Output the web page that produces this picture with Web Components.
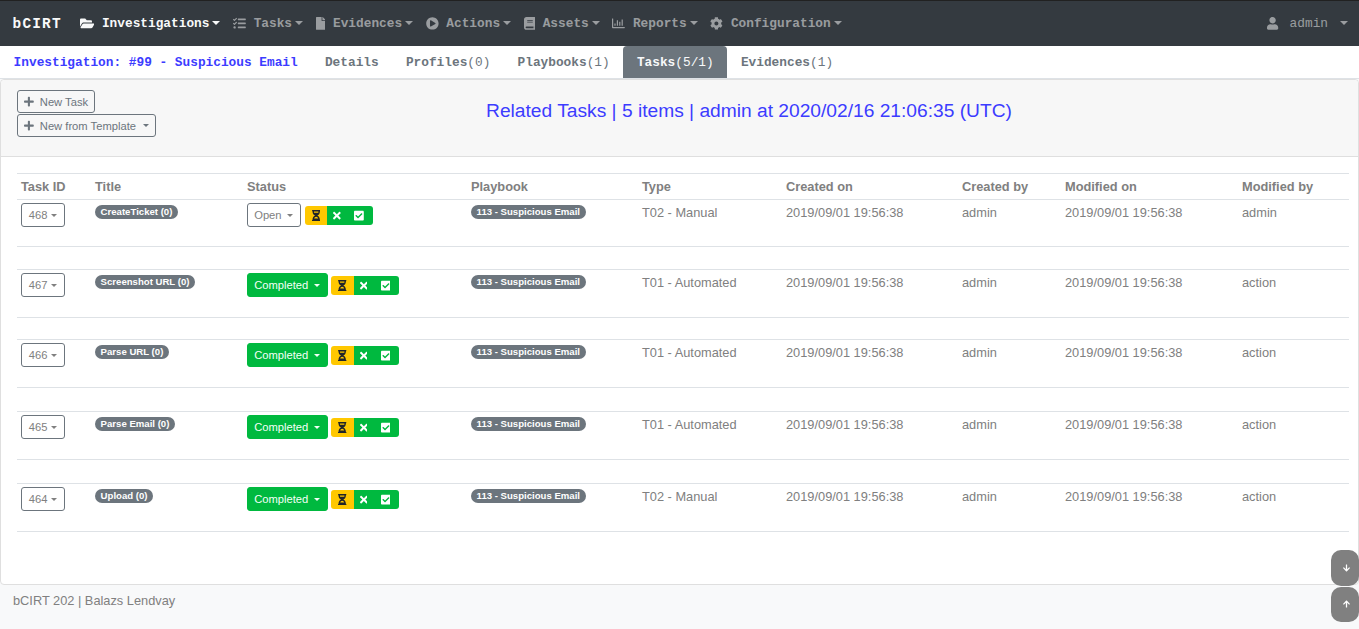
<!DOCTYPE html>
<html lang="en">
<head>
<meta charset="utf-8">
<title>bCIRT</title>
<style>
  html, body { margin: 0; padding: 0; height: 100%; overflow: hidden; background: #f8f9fa; }
  body { font-family: "Liberation Sans", Arial, sans-serif; display: flex; flex-direction: column; position: relative; }
</style>
</head>
<body>
<bc-navbar brand="bCIRT">
  <bc-nav-item icon="folder" active>Investigations</bc-nav-item>
  <bc-nav-item icon="tasks">Tasks</bc-nav-item>
  <bc-nav-item icon="file">Evidences</bc-nav-item>
  <bc-nav-item icon="play">Actions</bc-nav-item>
  <bc-nav-item icon="book">Assets</bc-nav-item>
  <bc-nav-item icon="chart">Reports</bc-nav-item>
  <bc-nav-item icon="cog">Configuration</bc-nav-item>
  <bc-user slot="right">admin</bc-user>
</bc-navbar>

<bc-tabs>
  <bc-tab kind="title">Investigation: #99 - Suspicious Email</bc-tab>
  <bc-tab>Details</bc-tab>
  <bc-tab count="(0)">Profiles</bc-tab>
  <bc-tab count="(1)">Playbooks</bc-tab>
  <bc-tab count="(5/1)" active>Tasks</bc-tab>
  <bc-tab count="(1)">Evidences</bc-tab>
</bc-tabs>

<bc-card>
  <bc-btn slot="tools" icon="plus">New Task</bc-btn>
  <bc-btn slot="tools" icon="plus" caret="7">New from Template</bc-btn>
  <span slot="heading">Related Tasks | 5 items | admin at 2020/02/16 21:06:35 (UTC)</span>

  <bc-task-table>
    <bc-task-row task="468" name="CreateTicket (0)" status="Open" book="113 - Suspicious Email" type="T02 - Manual" created="2019/09/01 19:56:38" creator="admin" modified="2019/09/01 19:56:38" modifier="admin" main="47" gap="23"></bc-task-row>
    <bc-task-row task="467" name="Screenshot URL (0)" status="Completed" book="113 - Suspicious Email" type="T01 - Automated" created="2019/09/01 19:56:38" creator="admin" modified="2019/09/01 19:56:38" modifier="action" main="48" gap="22"></bc-task-row>
    <bc-task-row task="466" name="Parse URL (0)" status="Completed" book="113 - Suspicious Email" type="T01 - Automated" created="2019/09/01 19:56:38" creator="admin" modified="2019/09/01 19:56:38" modifier="action" main="48" gap="24"></bc-task-row>
    <bc-task-row task="465" name="Parse Email (0)" status="Completed" book="113 - Suspicious Email" type="T01 - Automated" created="2019/09/01 19:56:38" creator="admin" modified="2019/09/01 19:56:38" modifier="action" main="48" gap="24"></bc-task-row>
    <bc-task-row task="464" name="Upload (0)" status="Completed" book="113 - Suspicious Email" type="T02 - Manual" created="2019/09/01 19:56:38" creator="admin" modified="2019/09/01 19:56:38" modifier="action" main="48" gap="0"></bc-task-row>
  </bc-task-table>
</bc-card>

<bc-footer>bCIRT 202 | Balazs Lendvay</bc-footer>
<bc-scroll-buttons></bc-scroll-buttons>

<script>
  const ICONS = {
    folder: [576, 'M572.694 292.093L500.27 416.248A63.997 63.997 0 0 1 444.989 448H45.025c-18.523 0-30.064-20.093-20.731-36.093l72.424-124.155A64 64 0 0 1 152 256h399.964c18.523 0 30.064 20.093 20.73 36.093zM152 224h328v-48c0-26.51-21.49-48-48-48H272l-64-64H48C21.49 64 0 85.49 0 112v278.046l69.077-118.418C86.214 242.25 117.989 224 152 224z'],
    tasks: [512, 'M139.61 35.5a12 12 0 0 0-17 0L58.93 98.81l-22.7-22.12a12 12 0 0 0-17 0L3.53 92.41a12 12 0 0 0 0 17l47.59 47.4a12.78 12.78 0 0 0 17.61 0l15.59-15.62L156.52 69a12.09 12.09 0 0 0 .09-17zm0 159.19a12 12 0 0 0-17 0l-63.68 63.72-22.7-22.1a12 12 0 0 0-17 0L3.53 252a12 12 0 0 0 0 17L51 316.5a12.77 12.77 0 0 0 17.6 0l15.7-15.69 72.2-72.22a12 12 0 0 0 .09-16.9zM64 368c-26.49 0-48.59 21.5-48.59 48S37.53 464 64 464a48 48 0 0 0 0-96zm432 16H208a16 16 0 0 0-16 16v32a16 16 0 0 0 16 16h288a16 16 0 0 0 16-16v-32a16 16 0 0 0-16-16zm0-320H208a16 16 0 0 0-16 16v32a16 16 0 0 0 16 16h288a16 16 0 0 0 16-16V80a16 16 0 0 0-16-16zm0 160H208a16 16 0 0 0-16 16v32a16 16 0 0 0 16 16h288a16 16 0 0 0 16-16v-32a16 16 0 0 0-16-16z'],
    file: [384, 'M224 136V0H24C10.7 0 0 10.7 0 24v464c0 13.3 10.7 24 24 24h336c13.3 0 24-10.7 24-24V160H248c-13.2 0-24-10.8-24-24zm160-14.1v6.1H256V0h6.1c6.4 0 12.5 2.5 17 7l97.9 98c4.5 4.5 7 10.6 7 16.9z'],
    play: [512, 'M256 8C119 8 8 119 8 256s111 248 248 248 248-111 248-248S393 8 256 8zm115.7 272l-176 101c-15.8 8.8-35.7-2.5-35.7-21V152c0-18.4 19.8-29.8 35.7-21l176 107c16.4 9.2 16.4 32.9 0 42z'],
    book: [448, 'M448 360V24c0-13.3-10.7-24-24-24H96C43 0 0 43 0 96v320c0 53 43 96 96 96h328c13.3 0 24-10.7 24-24v-16c0-7.5-3.5-14.3-8.9-18.7-4.2-15.4-4.2-59.3 0-74.7 5.4-4.3 8.9-11.1 8.9-18.6zM128 134c0-3.3 2.7-6 6-6h212c3.3 0 6 2.7 6 6v20c0 3.3-2.7 6-6 6H134c-3.3 0-6-2.7-6-6v-20zm0 64c0-3.3 2.7-6 6-6h212c3.3 0 6 2.7 6 6v20c0 3.3-2.7 6-6 6H134c-3.3 0-6-2.7-6-6v-20zm253.4 250H96c-17.7 0-32-14.3-32-32 0-17.6 14.4-32 32-32h285.4c-1.9 17.1-1.9 46.9 0 64z'],
    chart: [512, 'M396.8 352h22.4c6.4 0 12.8-6.4 12.8-12.8V108.8c0-6.4-6.4-12.8-12.8-12.8h-22.4c-6.4 0-12.8 6.4-12.8 12.8v230.4c0 6.4 6.4 12.8 12.8 12.8zm-192 0h22.4c6.4 0 12.8-6.4 12.8-12.8V140.8c0-6.4-6.4-12.8-12.8-12.8h-22.4c-6.4 0-12.8 6.4-12.8 12.8v198.4c0 6.4 6.4 12.8 12.8 12.8zm96 0h22.4c6.4 0 12.8-6.4 12.8-12.8V204.8c0-6.4-6.4-12.8-12.8-12.8h-22.4c-6.4 0-12.8 6.4-12.8 12.8v134.4c0 6.4 6.4 12.8 12.8 12.8zM496 400H48V80c0-8.84-7.16-16-16-16H16C7.16 64 0 71.16 0 80v336c0 17.67 14.33 32 32 32h464c8.84 0 16-7.16 16-16v-16c0-8.84-7.16-16-16-16zm-387.2-48h22.4c6.4 0 12.8-6.4 12.8-12.8v-70.4c0-6.4-6.4-12.8-12.8-12.8h-22.4c-6.4 0-12.8 6.4-12.8 12.8v70.4c0 6.4 6.4 12.8 12.8 12.8z'],
    cog: [512, 'M487.4 315.7l-42.6-24.6c4.3-23.2 4.3-47 0-70.2l42.6-24.6c4.9-2.8 7.1-8.6 5.5-14-11.1-35.6-30-67.8-54.7-94.6-3.8-4.1-10-5.1-14.8-2.3L380.8 110c-17.9-15.4-38.5-27.3-60.8-35.1V25.8c0-5.6-3.9-10.5-9.4-11.7-36.7-8.2-74.3-7.8-109.2 0-5.5 1.2-9.4 6.1-9.4 11.7V75c-22.2 7.9-42.8 19.8-60.8 35.1L88.7 85.5c-4.9-2.8-11-1.9-14.8 2.3-24.7 26.7-43.6 58.9-54.7 94.6-1.7 5.4.6 11.2 5.5 14L67.3 221c-4.3 23.2-4.3 47 0 70.2l-42.6 24.6c-4.9 2.8-7.1 8.6-5.5 14 11.1 35.6 30 67.8 54.7 94.6 3.8 4.1 10 5.1 14.8 2.3l42.6-24.6c17.9 15.4 38.5 27.3 60.8 35.1v49.2c0 5.6 3.9 10.5 9.4 11.7 36.7 8.2 74.3 7.8 109.2 0 5.5-1.2 9.4-6.1 9.4-11.7v-49.2c22.2-7.9 42.8-19.8 60.8-35.1l42.6 24.6c4.9 2.8 11 1.9 14.8-2.3 24.7-26.7 43.6-58.9 54.7-94.6 1.5-5.5-.7-11.3-5.6-14.1zM256 336c-44.1 0-80-35.9-80-80s35.9-80 80-80 80 35.9 80 80-35.9 80-80 80z'],
    user: [448, 'M224 256c70.7 0 128-57.3 128-128S294.7 0 224 0 96 57.3 96 128s57.3 128 128 128zm89.6 32h-16.7c-22.2 10.2-46.9 16-72.9 16s-50.6-5.8-72.9-16h-16.7C60.2 288 0 348.2 0 422.4V464c0 26.5 21.5 48 48 48h352c26.5 0 48-21.5 48-48v-41.6c0-74.2-60.2-134.4-134.4-134.4z'],
    plus: [448, 'M416 208H272V64c0-17.67-14.33-32-32-32h-32c-17.67 0-32 14.33-32 32v144H32c-17.67 0-32 14.33-32 32v32c0 17.67 14.33 32 32 32h144v144c0 17.67 14.33 32 32 32h32c17.67 0 32-14.33 32-32V304h144c17.67 0 32-14.33 32-32v-32c0-17.67-14.33-32-32-32z'],
    times: [352, 'M242.72 256l100.07-100.07c12.28-12.28 12.28-32.19 0-44.48l-22.24-22.24c-12.28-12.28-32.19-12.28-44.48 0L176 189.28 75.93 89.21c-12.28-12.28-32.19-12.28-44.48 0L9.21 111.45c-12.28 12.28-12.28 32.19 0 44.48L109.28 256 9.21 356.07c-12.28 12.28-12.28 32.19 0 44.48l22.24 22.24c12.28 12.28 32.2 12.28 44.48 0L176 322.72l100.07 100.07c12.28 12.28 32.2 12.28 44.48 0l22.24-22.24c12.28-12.28 12.28-32.19 0-44.48L242.72 256z'],
    check: [448, 'M400 480H48c-26.51 0-48-21.49-48-48V80c0-26.51 21.49-48 48-48h352c26.51 0 48 21.49 48 48v352c0 26.51-21.49 48-48 48zm-204.686-98.059l184-184c6.248-6.248 6.248-16.379 0-22.627l-22.627-22.627c-6.248-6.248-16.379-6.249-22.628 0L184 302.745l-70.059-70.059c-6.248-6.248-16.379-6.248-22.628 0l-22.627 22.627c-6.248 6.248-6.248 16.379 0 22.627l104 104c6.249 6.25 16.379 6.25 22.628.001z'],
    hourglass: [384, 'M360 0H24C10.745 0 0 10.745 0 24v16c0 13.255 10.745 24 24 24 0 90.965 51.016 167.734 120.842 192C75.016 280.266 24 357.035 24 448c-13.255 0-24 10.745-24 24v16c0 13.255 10.745 24 24 24h336c13.255 0 24-10.745 24-24v-16c0-13.255-10.745-24-24-24 0-90.965-51.016-167.734-120.842-192C308.984 231.734 360 154.965 360 64c13.255 0 24-10.745 24-24V24c0-13.255-10.745-24-24-24zm-75.078 384H99.08c17.059-46.797 52.096-80 92.92-80 40.821 0 75.862 33.196 92.922 80zm.019-256H99.078C91.988 108.548 88 86.748 88 64h208c0 22.805-3.987 44.587-11.059 64z'],
    up: [448, 'M34.9 289.5l-22.2-22.2c-9.4-9.4-9.4-24.6 0-33.9L207 39c9.4-9.4 24.6-9.4 33.9 0l194.3 194.3c9.4 9.4 9.4 24.6 0 33.9L413 289.4c-9.5 9.5-25 9.3-34.3-.4L264 168.6V456c0 13.3-10.7 24-24 24h-32c-13.3 0-24-10.7-24-24V168.6L69.2 289.1c-9.3 9.8-24.8 10-34.3.4z']
  };

  // 1em high svg, the width comes from the viewBox like a font icon
  function icon(name, size) {
    const [w, d] = ICONS[name];
    return `<svg xmlns="http://www.w3.org/2000/svg" viewBox="0 0 ${w} 512" width="${size * w / 512}" height="${size}" fill="currentColor" style="display:block;flex:none"><path d="${d}"/></svg>`;
  }

  const MONO = '"Liberation Mono", "Courier New", monospace';
  const SANS = '"Liberation Sans", Arial, sans-serif';

  class BcNavbar extends HTMLElement {
    connectedCallback() {
      this.attachShadow({ mode: 'open' }).innerHTML = `
        <style>
          :host { display: flex; align-items: center; height: 45px; flex: none; box-sizing: content-box;
                  background: #343a40; border-top: 1px solid #212121; font-family: ${MONO}; padding-left: 12.6px; }
          .brand { color: #f8f9fa; font-size: 14.4px; letter-spacing: 1.2px; font-weight: bold; margin-right: 11.7px; }
          nav { display: flex; align-items: center; }
          .right { margin-left: auto; padding-right: 11px; display: flex; }
        </style>
        <span class="brand">${this.getAttribute('brand')}</span>
        <nav><slot></slot></nav>
        <div class="right"><slot name="right"></slot></div>
      `;
    }
  }

  class BcNavItem extends HTMLElement {
    connectedCallback() {
      this.attachShadow({ mode: 'open' }).innerHTML = `
        <style>
          :host { display: flex; align-items: center; padding: 0 6.4px; font-size: 12.8px; font-weight: bold;
                  color: rgba(255,255,255,.5); white-space: nowrap; }
          :host([active]) { color: #f8f9fa; }
          .ic { margin-right: 7.68px; }
          .caret { margin-left: 2.94px; border-top: 4px solid; border-left: 4px solid transparent; border-right: 4px solid transparent; margin-top: -2px; }
        </style>
        <span class="ic">${icon(this.getAttribute('icon'), 12.8)}</span><slot></slot><span class="caret"></span>
      `;
    }
  }

  class BcUser extends HTMLElement {
    connectedCallback() {
      this.attachShadow({ mode: 'open' }).innerHTML = `
        <style>
          :host { display: flex; align-items: center; font-size: 12.8px; color: rgba(255,255,255,.5); white-space: nowrap; }
          .ic { margin-right: 11px; }
          .caret { margin-left: 12px; border-top: 4px solid; border-left: 4px solid transparent; border-right: 4px solid transparent; margin-top: -2px; }
        </style>
        <span class="ic">${icon('user', 12.8)}</span><slot></slot><span class="caret"></span>
      `;
    }
  }

  class BcTabs extends HTMLElement {
    connectedCallback() {
      this.attachShadow({ mode: 'open' }).innerHTML = `
        <style>
          :host { display: flex; flex: none; height: 32px; background: #fff; border-bottom: 1px solid #dee2e6; font-family: ${MONO}; }
        </style>
        <slot></slot>
      `;
    }
  }

  class BcTab extends HTMLElement {
    connectedCallback() {
      const count = this.getAttribute('count') || '';
      this.attachShadow({ mode: 'open' }).innerHTML = `
        <style>
          :host { display: block; padding: 1px 13.6px 0; height: 32px; box-sizing: border-box; font-size: 12.8px; line-height: 32px; color: #6c757d; white-space: nowrap; }
          :host([active]) { background: #6c757d; color: #f8f9fa; border-radius: 4px 4px 0 0; }
          :host([kind="title"]) { color: #3c3cff; }
          b { font-weight: bold; }
        </style>
        <b><slot></slot></b>${count}
      `;
    }
  }

  class BcCard extends HTMLElement {
    connectedCallback() {
      this.attachShadow({ mode: 'open' }).innerHTML = `
        <style>
          :host { display: flex; flex-direction: column; flex: 1; min-height: 0; background: #fff;
                  border: 1px solid #dfdfdf; border-radius: 4px; font-family: ${SANS}; }
          header { display: flex; height: 77px; box-sizing: border-box; padding: 10px 16px 0; flex: none;
                   background: #f7f7f7; border-bottom: 1px solid #dfdfdf; border-radius: 4px 4px 0 0; }
          .tools { display: flex; flex-direction: column; align-items: flex-start; gap: 1px; width: 139px; flex: none; }
          h1 { flex: 1; margin: 6.6px 0 0; text-align: center; font-size: 19.2px; font-weight: normal; color: #3c3cff; line-height: 28.8px; }
          .body { padding: 16px; }
        </style>
        <header>
          <div class="tools"><slot name="tools"></slot></div>
          <h1><slot name="heading"></slot></h1>
        </header>
        <div class="body"><slot></slot></div>
      `;
    }
  }

  class BcBtn extends HTMLElement {
    connectedCallback() {
      const ic = this.getAttribute('icon');
      const caret = this.getAttribute('caret');
      this.attachShadow({ mode: 'open' }).innerHTML = `
        <style>
          :host { display: inline-flex; align-items: center; box-sizing: border-box; height: 23px; padding: 0 6px;
                  border: 1px solid #6c757d; border-radius: 3px; font-size: 11.2px; color: #6c757d; white-space: nowrap; }
          :host([variant="success"]) { background: #00b93f; border-color: #00b93f; color: #f4fff7; }
          .ic { margin-right: 6px; }
          .caret { border-top: 3px solid; border-left: 3px solid transparent; border-right: 3px solid transparent; margin-top: -1px; }
        </style>
        ${ic ? `<span class="ic">${icon(ic, 11.2)}</span>` : ''}<slot></slot>${caret !== null ? `<span class="caret" style="margin-left:${caret}px"></span>` : ''}
      `;
    }
  }

  class BcBadge extends HTMLElement {
    connectedCallback() {
      this.attachShadow({ mode: 'open' }).innerHTML = `
        <style>
          :host { display: inline-block; box-sizing: border-box; height: 14px; line-height: 13px; padding: 0 5.6px; border-radius: 7px;
                  background: #6c757d; color: #fff; font-weight: bold; font-size: 9.6px; white-space: nowrap; }
        </style>
        <slot></slot>
      `;
    }
  }

  class BcActionGroup extends HTMLElement {
    connectedCallback() {
      this.attachShadow({ mode: 'open' }).innerHTML = `
        <style>
          :host { display: inline-flex; height: 19px; border-radius: 3px; overflow: hidden; margin-left: 3.7px; margin-top: 3px; }
          span { display: flex; align-items: center; justify-content: center; box-sizing: border-box; }
          .wait { width: 22.5px; background: #ffc800; color: #212529; }
          .no { width: 19.5px; background: #00b93f; color: #fff; }
          .yes { width: 26px; padding-right: 1.5px; background: #00b93f; color: #fff; }
        </style>
        <span class="wait">${icon('hourglass', 11.2)}</span>
        <span class="no">${icon('times', 11.2)}</span>
        <span class="yes">${icon('check', 11.2)}</span>
      `;
    }
  }

  const COLUMNS = '74px 152px 224px 171px 144px 176px 103px 177px 111px';

  class BcTaskTable extends HTMLElement {
    connectedCallback() {
      const heads = ['Task ID', 'Title', 'Status', 'Playbook', 'Type', 'Created on', 'Created by', 'Modified on', 'Modified by'];
      this.attachShadow({ mode: 'open' }).innerHTML = `
        <style>
          :host { display: block; width: 1332px; font-size: 12.8px; color: #808080; }
          .head { display: grid; grid-template-columns: ${COLUMNS}; height: 25px; align-items: center; font-weight: bold; border-top: 1px solid #dee2e6; }
          .head div { padding-left: 4px; }
        </style>
        <div class="head">${heads.map(h => `<div>${h}</div>`).join('')}</div>
        <slot></slot>
      `;
    }
  }

  class BcTaskRow extends HTMLElement {
    connectedCallback() {
      const a = n => this.getAttribute(n);
      const status = a('status');
      const variant = status === 'Completed' ? 'variant="success"' : '';
      this.attachShadow({ mode: 'open' }).innerHTML = `
        <style>
          :host { display: block; border-top: 1px solid #dee2e6; }
          .main { display: grid; grid-template-columns: ${COLUMNS}; box-sizing: border-box; height: ${a('main')}px; border-bottom: 1px solid #dee2e6; }
          .main > div { padding: 3px 0 0 4px; line-height: 19.2px; }
          .gap { height: ${Math.max(a('gap') - 1, 0)}px; }
          .id, .status { display: flex; align-items: flex-start; }
          .id bc-btn { padding: 1px 6.7px 0; height: 24px; color: #808080; }
          .status bc-btn { padding: 1px 6.7px 0 6.2px; height: 24px; }
          .status bc-btn:not([variant]) { color: #808080; }
          bc-badge { margin-top: 2px; vertical-align: top; }
        </style>
        <div class="main">
          <div class="id"><bc-btn caret="4">${a('task')}</bc-btn></div>
          <div><bc-badge>${a('name')}</bc-badge></div>
          <div class="status"><bc-btn ${variant} caret="5.6">${status}</bc-btn><bc-action-group></bc-action-group></div>
          <div><bc-badge>${a('book')}</bc-badge></div>
          <div>${a('type')}</div>
          <div>${a('created')}</div>
          <div>${a('creator')}</div>
          <div>${a('modified')}</div>
          <div>${a('modifier')}</div>
        </div>
        <div class="gap"></div>
      `;
    }
  }

  class BcFooter extends HTMLElement {
    connectedCallback() {
      this.attachShadow({ mode: 'open' }).innerHTML = `
        <style>
          :host { display: block; flex: none; height: 44px; box-sizing: border-box; padding: 6px 13px 0; background: #f8f9fa;
                  font-size: 12.8px; line-height: 19.2px; color: #808080; font-family: ${SANS}; }
        </style>
        <slot></slot>
      `;
    }
  }

  class BcScrollButtons extends HTMLElement {
    connectedCallback() {
      this.attachShadow({ mode: 'open' }).innerHTML = `
        <style>
          :host { position: absolute; right: 0; top: 550px; width: 28px; display: flex; flex-direction: column; gap: 1px; }
          div { height: 35.5px; padding-left: 2px; box-sizing: border-box; background: #808080; border-radius: 10px; color: #fff; display: flex; align-items: center; justify-content: center; }
          .down svg { transform: rotate(180deg); }
        </style>
        <div class="down">${icon('up', 8)}</div>
        <div>${icon('up', 8)}</div>
      `;
    }
  }

  customElements.define('bc-navbar', BcNavbar);
  customElements.define('bc-nav-item', BcNavItem);
  customElements.define('bc-user', BcUser);
  customElements.define('bc-tabs', BcTabs);
  customElements.define('bc-tab', BcTab);
  customElements.define('bc-card', BcCard);
  customElements.define('bc-btn', BcBtn);
  customElements.define('bc-badge', BcBadge);
  customElements.define('bc-action-group', BcActionGroup);
  customElements.define('bc-task-table', BcTaskTable);
  customElements.define('bc-task-row', BcTaskRow);
  customElements.define('bc-footer', BcFooter);
  customElements.define('bc-scroll-buttons', BcScrollButtons);
</script>
</body>
</html>
